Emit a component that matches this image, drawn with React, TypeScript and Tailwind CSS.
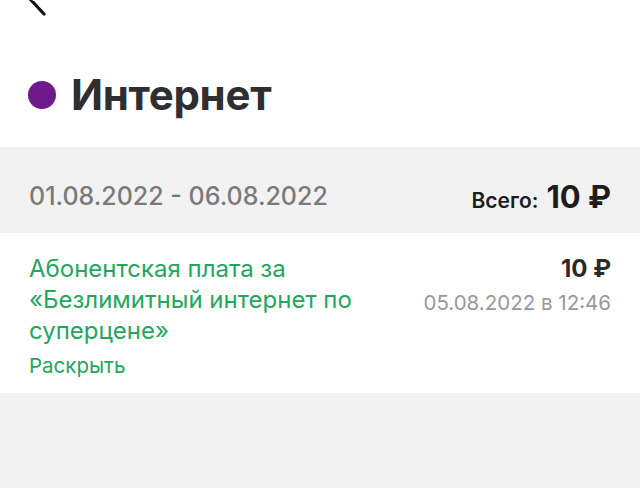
export default function App() {
  return (
    <div
      className="flex h-[488px] w-[640px] flex-col overflow-hidden bg-[#f2f2f2]"
      style={{ fontFamily: "Inter, 'Noto Sans', sans-serif" }}
    >
      <div className="bg-white">
        <div className="h-[16px] overflow-hidden pl-[24px]">
          <svg width="28" height="40" viewBox="0 0 28 40" className="-mt-[24px]">
            <path d="M22 8 L7 24 L20 38" fill="none" stroke="#111" strokeWidth="3.2" strokeLinecap="round" />
          </svg>
        </div>
        <div className="flex h-[131px] items-center gap-[15px] pl-[28px] pt-[26px]">
          <span className="h-[28px] w-[28px] rounded-full bg-[#6e1a8c]" />
          <h1 className="text-[42px] font-bold tracking-[-0.3px] text-[#2f2f2f]">Интернет</h1>
        </div>
      </div>

      <div className="flex h-[86px] items-center justify-between px-[29px] pt-[14px]">
        <span className="text-[25px] font-medium text-[#7a7a7a]">01.08.2022 - 06.08.2022</span>
        <span className="flex items-baseline gap-[8px] text-[#1d1d1d]">
          <span className="text-[21px] font-semibold">Всего:</span>
          <span className="text-[31px] font-bold">10 ₽</span>
        </span>
      </div>

      <div className="flex h-[160px] justify-between bg-white px-[29px] pt-[20px]">
        <div className="flex flex-col">
          <p className="w-[360px] text-[24px] leading-[31px] text-[#23a65e]">
            Абонентская плата за «Безлимитный интернет по суперцене»
          </p>
          <span className="mt-[5px] text-[20.5px] text-[#23a65e]">Раскрыть</span>
        </div>
        <div className="flex flex-col items-end">
          <span className="text-[24px] font-bold leading-[31px] text-[#2a2a2a]">10 ₽</span>
          <span className="mt-[4px] text-[20.5px] text-[#999]">05.08.2022 в 12:46</span>
        </div>
      </div>

      <div className="flex-1" />
    </div>
  );
}
